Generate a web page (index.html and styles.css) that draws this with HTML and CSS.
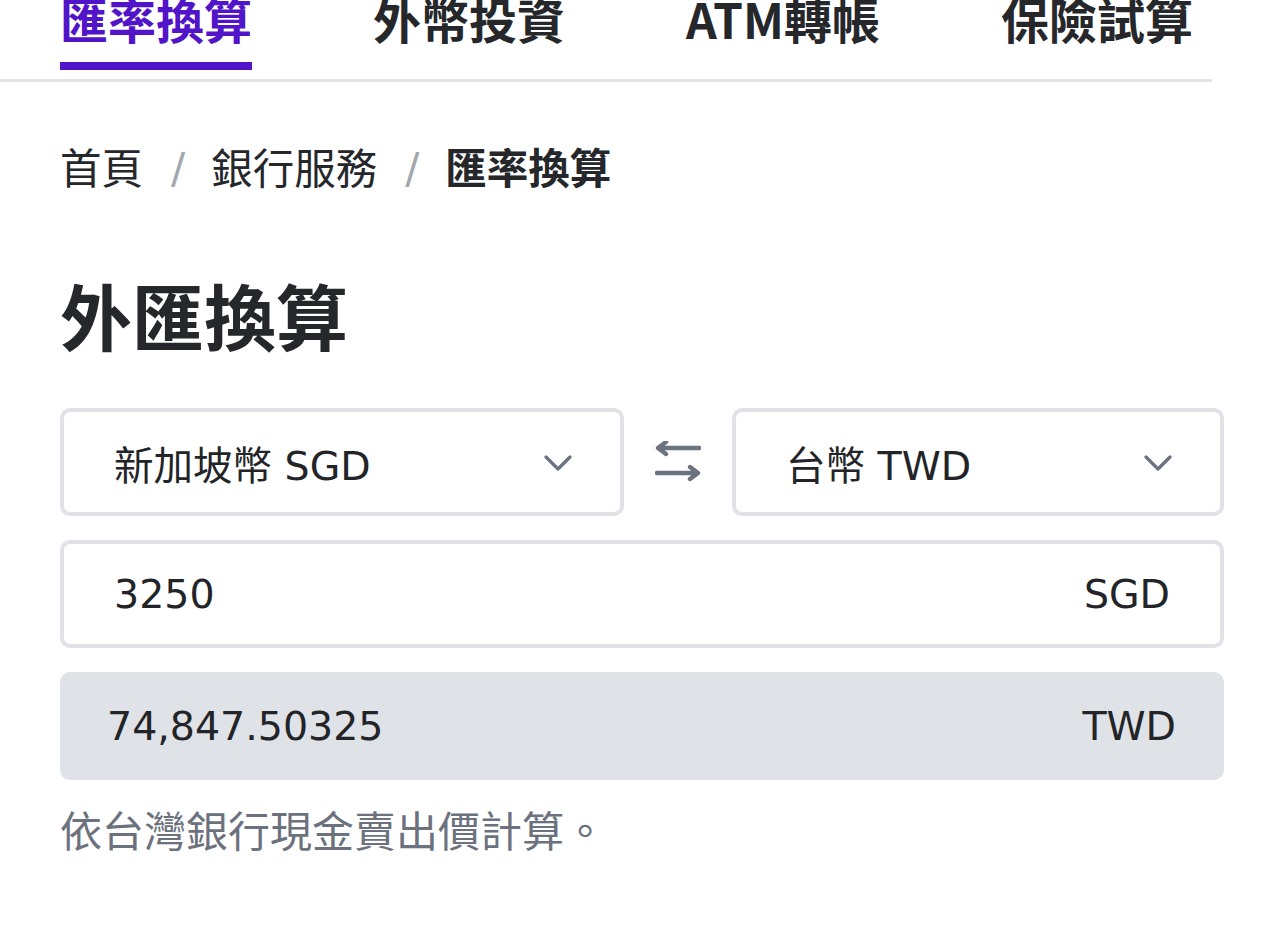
FILE: index.html
```html
<!DOCTYPE html>
<html lang="zh-Hant">
<head>
<meta charset="utf-8">
<title>外匯換算</title>
<link rel="stylesheet" href="styles.css">
</head>
<body>
<nav class="tabs">
  <a class="tab active">匯率換算</a>
  <a class="tab">外幣投資</a>
  <a class="tab">ATM轉帳</a>
  <a class="tab">保險試算</a>
</nav>
<main class="page">
  <div class="crumbs">
    <span class="crumb">首頁</span>
    <span class="sep">/</span>
    <span class="crumb">銀行服務</span>
    <span class="sep">/</span>
    <span class="crumb current">匯率換算</span>
  </div>
  <h1 class="title">外匯換算</h1>
  <div class="pair">
    <div class="select">
      <span class="select-text">新加坡幣 SGD</span>
      <svg class="chev" width="28" height="16" viewBox="0 0 28 16"><polyline points="2,2 14,14 26,2" fill="none" stroke="#6b7280" stroke-width="3.2" stroke-linecap="round" stroke-linejoin="round"/></svg>
    </div>
    <div class="swap">
      <svg width="46" height="44" viewBox="0 0 46 44"><path d="M3 7 H44 M11 1 L3 7 L11 13 M2 32 H43 M35 26 L43 32 L35 38" fill="none" stroke="#6b7280" stroke-width="4.4" stroke-linejoin="round" stroke-linecap="round"/></svg>
    </div>
    <div class="select">
      <span class="select-text">台幣 TWD</span>
      <svg class="chev" width="28" height="16" viewBox="0 0 28 16"><polyline points="2,2 14,14 26,2" fill="none" stroke="#6b7280" stroke-width="3.2" stroke-linecap="round" stroke-linejoin="round"/></svg>
    </div>
  </div>
  <div class="field input">
    <span class="value">3250</span>
    <span class="unit">SGD</span>
  </div>
  <div class="field result">
    <span class="value">74,847.50325</span>
    <span class="unit">TWD</span>
  </div>
  <p class="note">依台灣銀行現金賣出價計算。</p>
</main>
</body>
</html>
```
FILE: styles.css
```css
* { box-sizing: border-box; }
html, body { margin: 0; padding: 0; background: #ffffff; }
body {
  width: 1284px;
  height: 937px;
  overflow: hidden;
  font-family: "Noto Sans CJK TC", sans-serif;
  color: #212529;
}
.tabs {
  display: flex;
  gap: 121px;
  width: 1212px;
  padding: 0 0 9px 60px;
  margin-top: -6px;
  border-bottom: 3px solid #e2e4e8;
}
.tab {
  font-family: "Noto Sans CJK TC", sans-serif;
  font-weight: 700;
  font-size: 48px;
  line-height: 48px;
  color: #25272b;
  padding-bottom: 20px;
  border-bottom: 8px solid transparent;
  white-space: nowrap;
}
.tab.active {
  color: #5214c8;
  border-bottom-color: #5214c8;
}
.page {
  padding: 0 0 0 60px;
  width: 1224px;
}
.crumbs {
  margin-top: 64px;
  display: flex;
  align-items: center;
  font-size: 41.5px;
  line-height: 40px;
  color: #25272b;
}
.sep {
  color: #a3a7ae;
  font-family: "DejaVu Sans", sans-serif;
  font-size: 42px;
  padding: 0 26px 0 28px;
  transform: translateY(3px);
}
.current { font-weight: 700; }
.title {
  margin: 92px 0 0 0;
  font-size: 72px;
  line-height: 72px;
  font-weight: 700;
  color: #25272b;
}
.pair {
  margin-top: 58px;
  display: grid;
  grid-template-columns: 564px 108px 492px;
  height: 108px;
}
.select {
  border: 4px solid #e0e2e6;
  border-radius: 10px;
  background: #fff;
  display: flex;
  align-items: center;
  justify-content: space-between;
  padding: 0 48px 0 50px;
}
.select-text, .value, .unit {
  font-family: "DejaVu Sans", "Noto Sans CJK TC", sans-serif;
  font-size: 39.5px;
  color: #222428;
}
.chev { display: block; margin-top: 2px; }
.swap {
  display: flex;
  align-items: center;
  justify-content: center;
}
.swap svg { display: block; margin-top: 1px; }
.field {
  margin-top: 24px;
  height: 108px;
  border-radius: 10px;
  display: flex;
  align-items: center;
  justify-content: space-between;
  padding: 0 48px;
}
.input {
  border: 4px solid #e0e2e6;
  background: #fff;
  padding: 0 50px;
}
.result {
  background: #dfe2e6;
  padding: 0 48px 0 47px;
}
.note {
  margin: 28px 0 0 0;
  font-size: 42px;
  line-height: 41px;
  color: #6c727d;
}
```
